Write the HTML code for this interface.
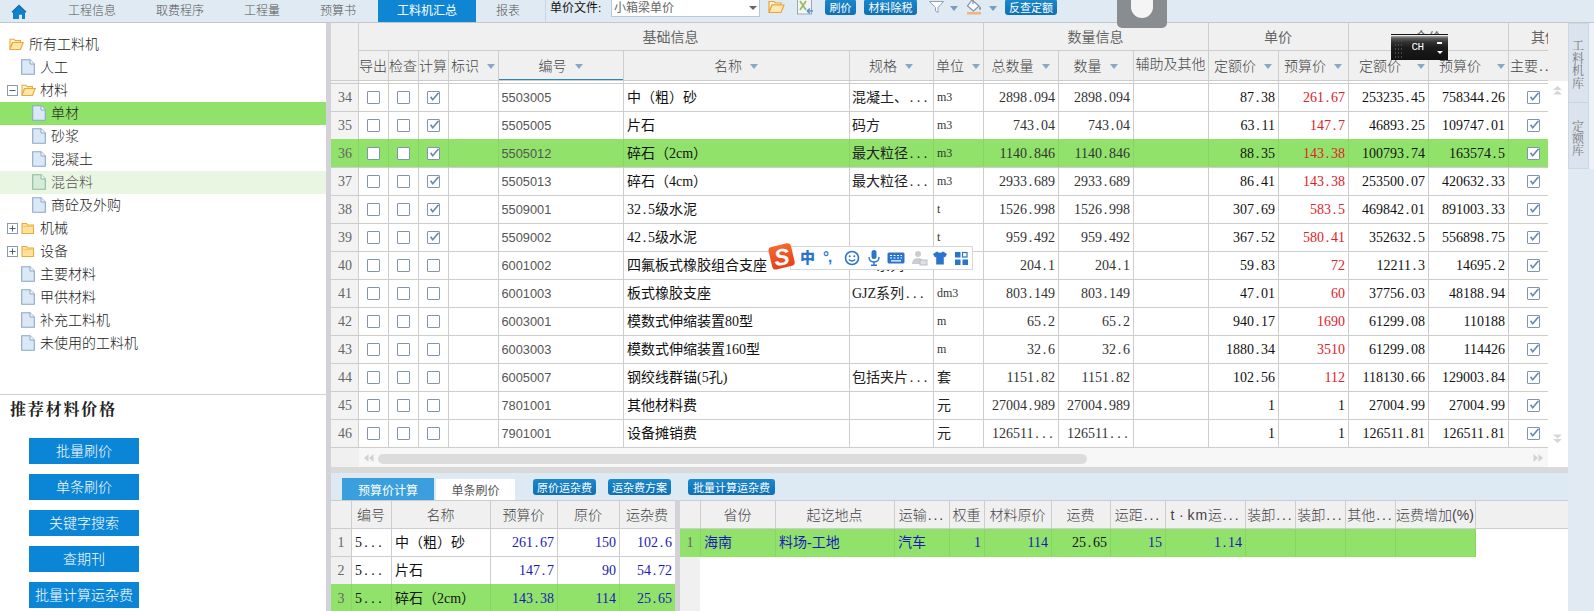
<!DOCTYPE html><html lang="zh-CN"><head><meta charset="utf-8"><title>工料机汇总</title><style>
*{box-sizing:border-box;margin:0;padding:0}
html,body{width:1594px;height:611px;overflow:hidden;background:#fff}
body{position:relative;font-family:"Liberation Sans","Noto Sans CJK SC",sans-serif;font-size:14px;color:#222}
.a{position:absolute;white-space:nowrap;overflow:hidden}
.t{position:absolute;white-space:nowrap}
.sans{font-family:"Liberation Sans","Noto Sans CJK SC",sans-serif}
.song{font-family:"Liberation Serif","Noto Sans CJK SC",sans-serif}
.p{display:inline-block;width:7px;text-align:center}
.q{display:inline-block;width:5.8px;text-align:center}
.hl{position:absolute;background:#d0d0d0;height:1px}
.vl{position:absolute;background:#d0d0d0;width:1px}
.cb{position:absolute;width:13px;height:13px;border:1px solid #8195b0;background:#fff;border-radius:1px}
.btn{position:absolute;background:linear-gradient(#1c88cc,#0f70b4);color:#fff;border-radius:3px;text-align:center;font-size:11px;white-space:nowrap;overflow:hidden}
.bbtn{position:absolute;background:#0b86d6;color:#fff;font-weight:300;text-align:center;font-size:14px;white-space:nowrap;left:29px;width:110px;height:26px;line-height:27px}
.hd{position:absolute;color:#444;font-weight:300;font-size:14px;white-space:nowrap;text-align:center}
.arr{position:absolute;width:0;height:0;border-left:4px solid transparent;border-right:4px solid transparent;border-top:5px solid #7a9cc0}
.tree{position:absolute;font-size:14px;font-weight:300;color:#111;white-space:nowrap;height:23px;line-height:22px}
</style></head><body>
<div class="a" style="left:0px;top:0px;width:1594px;height:23px;background:#e0eaf3;border-bottom:1px solid #c2c7cc"></div>
<svg class="a" style="left:11px;top:4px" width="16" height="16" viewBox="0 0 16 16"><path d="M2 7.2 L8 2 L14 7.2 V15 H11 V10.7 H8 V15 H2 Z" fill="#1080c9"/><path d="M1 8.3 L8 1.5 L15 8.3" fill="none" stroke="#0e6fb2" stroke-width="1.5"/></svg>
<div class="a" style="left:378px;top:0px;width:98px;height:22px;background:#0f86d3;"></div>
<div class="a " style="left:378px;top:0px;width:98px;height:22px;line-height:22px;color:#fff;font-size:12px;text-align:center;line-height:23px">工料机汇总</div>
<div class="a " style="left:52px;top:0px;width:80px;height:22px;line-height:22px;color:#555;font-size:12px;text-align:center;line-height:23px;font-weight:300">工程信息</div>
<div class="a " style="left:140px;top:0px;width:80px;height:22px;line-height:22px;color:#555;font-size:12px;text-align:center;line-height:23px;font-weight:300">取费程序</div>
<div class="a " style="left:222px;top:0px;width:80px;height:22px;line-height:22px;color:#555;font-size:12px;text-align:center;line-height:23px;font-weight:300">工程量</div>
<div class="a " style="left:298px;top:0px;width:80px;height:22px;line-height:22px;color:#555;font-size:12px;text-align:center;line-height:23px;font-weight:300">预算书</div>
<div class="a " style="left:468px;top:0px;width:80px;height:22px;line-height:22px;color:#555;font-size:12px;text-align:center;line-height:23px;font-weight:300">报表</div>
<div class="vl" style="left:545px;top:0px;height:22px;background:#c9d5e0"></div>
<div class="a song" style="left:550px;top:0px;width:60px;height:16px;line-height:16px;color:#111;font-size:12px;">单价文件:</div>
<div class="a" style="left:611px;top:-1px;width:149px;height:18px;background:#fff;border:1px solid #b9c7d6"></div>
<div class="a song" style="left:614px;top:0px;width:130px;height:16px;line-height:16px;color:#666;font-size:12px">小箱梁单价</div>
<div class="arr" style="left:749px;top:6px;border-top-color:#666;border-left-width:4px;border-right-width:4px;border-top-width:4px"></div>
<svg class="a" style="left:768px;top:0px" width="17" height="14" viewBox="0 0 17 14"><path d="M1 1.5 H6 L7.5 3 H13 V5 H4 L1 12 Z" fill="#fff6dc" stroke="#e9a33a" stroke-width="1.2"/><path d="M4 5 H16 L13 12.5 H1 Z" fill="#ffe9b0" stroke="#e9a33a" stroke-width="1.2"/></svg>
<svg class="a" style="left:797px;top:0px" width="18" height="15" viewBox="0 0 18 15"><rect x="0.5" y="-1" width="14" height="15" fill="#f4f6f4" stroke="#9aa7b5"/><path d="M3 1 L9 10 M9 1 L3 10" stroke="#9cba6e" stroke-width="1.8"/><path d="M10 11 h6 M10 11 l3 -2.5 M10 11 l3 2.5" stroke="#5b8fd0" stroke-width="1.4" fill="none"/></svg>
<div class="btn" style="left:825px;top:-1px;width:31px;height:16px;line-height:19px">刷价</div>
<div class="btn" style="left:864px;top:-1px;width:53px;height:16px;line-height:19px">材料除税</div>
<svg class="a" style="left:928px;top:0px" width="18" height="14" viewBox="0 0 18 14"><path d="M1.5 1.5 H15.5 L10 7.5 V12.5 L7.5 11 V7.5 Z" fill="#fff" stroke="#8fa2b8" stroke-width="1"/></svg>
<div class="arr" style="left:950px;top:6px"></div>
<svg class="a" style="left:965px;top:-2px" width="20" height="18" viewBox="0 0 20 18"><path d="M7 2 L14 8 L8.5 13 L2.5 8 Z" fill="#fff" stroke="#7d93ab" stroke-width="1.2"/><path d="M8 0 V6" stroke="#7d93ab" stroke-width="1.2"/><path d="M15 8 q2 3 0 4 q-2 -1 0 -4" fill="#7d93ab"/><rect x="2" y="14" width="14" height="2.5" fill="#f3b27a"/></svg>
<div class="arr" style="left:989px;top:6px"></div>
<div class="btn" style="left:1005px;top:-1px;width:52px;height:16px;line-height:19px">反查定额</div>
<div class="a" style="left:0px;top:23px;width:326px;height:588px;background:#fff;"></div>
<div class="a" style="left:326px;top:23px;width:5px;height:588px;background:#d2d2d8;"></div>
<svg class="a" style="left:9px;top:38.0px" width="15" height="13" viewBox="0 0 15 13"><path d="M1 1.2 H5 L6.3 2.6 H11.5 V4.5 H3.6 L1 10.8 Z" fill="#fff4d6" stroke="#e8a93f" stroke-width="1.1"/><path d="M3.6 4.5 H14.2 L11.5 11.5 H0.9 Z" fill="#ffe6a6" stroke="#e8a93f" stroke-width="1.1"/></svg>
<div class="tree" style="left:29px;top:32.5px;color:#222">所有工料机</div>
<svg class="a" style="left:21px;top:59.0px" width="14" height="16" viewBox="0 0 14 16"><path d="M0.7 0.7 H9 L13.3 5 V15.3 H0.7 Z" fill="#dbe8f6" stroke="#8ba6c8" stroke-width="1.1"/><path d="M9 0.7 V5 H13.3" fill="#f4f8fc" stroke="#8ba6c8" stroke-width="1"/></svg>
<div class="tree" style="left:40px;top:55.5px;color:#222">人工</div>
<svg class="a" style="left:7px;top:84.5px" width="11" height="11" viewBox="0 0 11 11"><rect x="0.5" y="0.5" width="10" height="10" fill="#fff" stroke="#8a9bb3"/><path d="M2.5 5.5 H8.5" stroke="#4a5a70" stroke-width="1"/></svg>
<svg class="a" style="left:21px;top:84.0px" width="15" height="13" viewBox="0 0 15 13"><path d="M1 1.2 H5 L6.3 2.6 H11.5 V4.5 H3.6 L1 10.8 Z" fill="#fff4d6" stroke="#e8a93f" stroke-width="1.1"/><path d="M3.6 4.5 H14.2 L11.5 11.5 H0.9 Z" fill="#ffe6a6" stroke="#e8a93f" stroke-width="1.1"/></svg>
<div class="tree" style="left:40px;top:78.5px;color:#222">材料</div>
<div class="a" style="left:0px;top:101.5px;width:326px;height:23px;background:#91e26b;"></div>
<svg class="a" style="left:32px;top:105.0px" width="14" height="16" viewBox="0 0 14 16"><path d="M0.7 0.7 H9 L13.3 5 V15.3 H0.7 Z" fill="#dbe8f6" stroke="#8ba6c8" stroke-width="1.1"/><path d="M9 0.7 V5 H13.3" fill="#f4f8fc" stroke="#8ba6c8" stroke-width="1"/></svg>
<div class="tree" style="left:51px;top:101.5px;color:#222">单材</div>
<svg class="a" style="left:32px;top:128.0px" width="14" height="16" viewBox="0 0 14 16"><path d="M0.7 0.7 H9 L13.3 5 V15.3 H0.7 Z" fill="#dbe8f6" stroke="#8ba6c8" stroke-width="1.1"/><path d="M9 0.7 V5 H13.3" fill="#f4f8fc" stroke="#8ba6c8" stroke-width="1"/></svg>
<div class="tree" style="left:51px;top:124.5px;color:#222">砂浆</div>
<svg class="a" style="left:32px;top:151.0px" width="14" height="16" viewBox="0 0 14 16"><path d="M0.7 0.7 H9 L13.3 5 V15.3 H0.7 Z" fill="#dbe8f6" stroke="#8ba6c8" stroke-width="1.1"/><path d="M9 0.7 V5 H13.3" fill="#f4f8fc" stroke="#8ba6c8" stroke-width="1"/></svg>
<div class="tree" style="left:51px;top:147.5px;color:#222">混凝土</div>
<div class="a" style="left:0px;top:170.5px;width:326px;height:23px;background:#e9f6e2;"></div>
<svg class="a" style="left:32px;top:174.0px" width="14" height="16" viewBox="0 0 14 16"><path d="M0.7 0.7 H9 L13.3 5 V15.3 H0.7 Z" fill="#d5ecd9" stroke="#8fb9a0" stroke-width="1.1"/><path d="M9 0.7 V5 H13.3" fill="#f4f8fc" stroke="#8fb9a0" stroke-width="1"/></svg>
<div class="tree" style="left:51px;top:170.5px;color:#555">混合料</div>
<svg class="a" style="left:32px;top:197.0px" width="14" height="16" viewBox="0 0 14 16"><path d="M0.7 0.7 H9 L13.3 5 V15.3 H0.7 Z" fill="#dbe8f6" stroke="#8ba6c8" stroke-width="1.1"/><path d="M9 0.7 V5 H13.3" fill="#f4f8fc" stroke="#8ba6c8" stroke-width="1"/></svg>
<div class="tree" style="left:51px;top:193.5px;color:#222">商砼及外购</div>
<svg class="a" style="left:7px;top:222.5px" width="11" height="11" viewBox="0 0 11 11"><rect x="0.5" y="0.5" width="10" height="10" fill="#fff" stroke="#8a9bb3"/><path d="M2.5 5.5 H8.5" stroke="#4a5a70" stroke-width="1"/><path d="M5.5 2.5 V8.5" stroke="#4a5a70" stroke-width="1"/></svg>
<svg class="a" style="left:21px;top:222.0px" width="14" height="13" viewBox="0 0 14 13"><path d="M1 1.5 H5.5 L6.8 3 H12.5 V11.5 H1 Z" fill="#ffe29a" stroke="#e8a93f" stroke-width="1.1"/><path d="M1 4.4 H12.5" stroke="#f3c569" stroke-width="1"/></svg>
<div class="tree" style="left:40px;top:216.5px;color:#222">机械</div>
<svg class="a" style="left:7px;top:245.5px" width="11" height="11" viewBox="0 0 11 11"><rect x="0.5" y="0.5" width="10" height="10" fill="#fff" stroke="#8a9bb3"/><path d="M2.5 5.5 H8.5" stroke="#4a5a70" stroke-width="1"/><path d="M5.5 2.5 V8.5" stroke="#4a5a70" stroke-width="1"/></svg>
<svg class="a" style="left:21px;top:245.0px" width="14" height="13" viewBox="0 0 14 13"><path d="M1 1.5 H5.5 L6.8 3 H12.5 V11.5 H1 Z" fill="#ffe29a" stroke="#e8a93f" stroke-width="1.1"/><path d="M1 4.4 H12.5" stroke="#f3c569" stroke-width="1"/></svg>
<div class="tree" style="left:40px;top:239.5px;color:#222">设备</div>
<svg class="a" style="left:21px;top:266.0px" width="14" height="16" viewBox="0 0 14 16"><path d="M0.7 0.7 H9 L13.3 5 V15.3 H0.7 Z" fill="#dbe8f6" stroke="#8ba6c8" stroke-width="1.1"/><path d="M9 0.7 V5 H13.3" fill="#f4f8fc" stroke="#8ba6c8" stroke-width="1"/></svg>
<div class="tree" style="left:40px;top:262.5px;color:#222">主要材料</div>
<svg class="a" style="left:21px;top:289.0px" width="14" height="16" viewBox="0 0 14 16"><path d="M0.7 0.7 H9 L13.3 5 V15.3 H0.7 Z" fill="#dbe8f6" stroke="#8ba6c8" stroke-width="1.1"/><path d="M9 0.7 V5 H13.3" fill="#f4f8fc" stroke="#8ba6c8" stroke-width="1"/></svg>
<div class="tree" style="left:40px;top:285.5px;color:#222">甲供材料</div>
<svg class="a" style="left:21px;top:312.0px" width="14" height="16" viewBox="0 0 14 16"><path d="M0.7 0.7 H9 L13.3 5 V15.3 H0.7 Z" fill="#dbe8f6" stroke="#8ba6c8" stroke-width="1.1"/><path d="M9 0.7 V5 H13.3" fill="#f4f8fc" stroke="#8ba6c8" stroke-width="1"/></svg>
<div class="tree" style="left:40px;top:308.5px;color:#222">补充工料机</div>
<svg class="a" style="left:21px;top:335.0px" width="14" height="16" viewBox="0 0 14 16"><path d="M0.7 0.7 H9 L13.3 5 V15.3 H0.7 Z" fill="#dbe8f6" stroke="#8ba6c8" stroke-width="1.1"/><path d="M9 0.7 V5 H13.3" fill="#f4f8fc" stroke="#8ba6c8" stroke-width="1"/></svg>
<div class="tree" style="left:40px;top:331.5px;color:#222">未使用的工料机</div>
<div class="hl" style="left:0px;top:394px;width:326px;background:#cfcfcf"></div>
<div class="t" style="left:10px;top:399px;font-family:'Liberation Serif','Noto Serif CJK SC',serif;font-weight:bold;font-size:16px;letter-spacing:1.8px;color:#222;line-height:22px">推荐材料价格</div>
<div class="bbtn" style="top:438px">批量刷价</div>
<div class="bbtn" style="top:474px">单条刷价</div>
<div class="bbtn" style="top:510px">关键字搜索</div>
<div class="bbtn" style="top:546px">查期刊</div>
<div class="bbtn" style="top:582px">批量计算运杂费</div>
<div class="a" style="left:331px;top:23px;width:1237px;height:425px;background:#fff;"></div>
<div class="a" style="left:331px;top:23px;width:1237px;height:58px;background:#f0f0f0;"></div>
<div class="a" style="left:331px;top:81px;width:28px;height:386px;background:#f3f3f3;"></div>
<div class="a " style="left:358px;top:23px;width:625px;height:28px;line-height:28px;color:#666;font-size:14px;text-align:center">基础信息</div>
<div class="a " style="left:983px;top:23px;width:225px;height:28px;line-height:28px;color:#666;font-size:14px;text-align:center">数量信息</div>
<div class="a " style="left:1208px;top:23px;width:140px;height:28px;line-height:28px;color:#666;font-size:14px;text-align:center">单价</div>
<div class="a " style="left:1348px;top:23px;width:160px;height:28px;line-height:28px;color:#666;font-size:14px;text-align:center">合价</div>
<div class="a " style="left:1531px;top:23px;width:17px;height:28px;line-height:28px;color:#666;font-size:14px;text-align:left">其他</div>
<div class="hl" style="left:358px;top:50px;width:1190px;background:#cdcdcd"></div>
<div class="hl" style="left:331px;top:80px;width:1217px;background:#cdcdcd"></div>
<div class="hd" style="left:358.0px;top:52px;width:30.0px;height:29px;line-height:29px;overflow:hidden">导出</div>
<div class="hd" style="left:388.0px;top:52px;width:30.0px;height:29px;line-height:29px;overflow:hidden">检查</div>
<div class="hd" style="left:418.0px;top:52px;width:30.0px;height:29px;line-height:29px;overflow:hidden">计算</div>
<div class="hd" style="left:448.0px;top:52px;width:50.0px;height:29px;line-height:29px;padding-left:0px">标识<span style="display:inline-block;width:0;height:0;border-left:4.5px solid transparent;border-right:4.5px solid transparent;border-top:5px solid #89a7c6;margin-left:8px;vertical-align:middle;position:relative;top:-1px"></span></div>
<div class="hd" style="left:498.0px;top:52px;width:125.0px;height:29px;line-height:29px;padding-left:0px">编号<span style="display:inline-block;width:0;height:0;border-left:4.5px solid transparent;border-right:4.5px solid transparent;border-top:5px solid #89a7c6;margin-left:8px;vertical-align:middle;position:relative;top:-1px"></span></div>
<div class="hd" style="left:623.0px;top:52px;width:226.0px;height:29px;line-height:29px;padding-left:0px">名称<span style="display:inline-block;width:0;height:0;border-left:4.5px solid transparent;border-right:4.5px solid transparent;border-top:5px solid #89a7c6;margin-left:8px;vertical-align:middle;position:relative;top:-1px"></span></div>
<div class="hd" style="left:849.0px;top:52px;width:84.0px;height:29px;line-height:29px;padding-left:0px">规格<span style="display:inline-block;width:0;height:0;border-left:4.5px solid transparent;border-right:4.5px solid transparent;border-top:5px solid #89a7c6;margin-left:8px;vertical-align:middle;position:relative;top:-1px"></span></div>
<div class="hd" style="left:933.0px;top:52px;width:50.0px;height:29px;line-height:29px;padding-left:0px">单位<span style="display:inline-block;width:0;height:0;border-left:4.5px solid transparent;border-right:4.5px solid transparent;border-top:5px solid #89a7c6;margin-left:8px;vertical-align:middle;position:relative;top:-1px"></span></div>
<div class="hd" style="left:983.0px;top:52px;width:75.0px;height:29px;line-height:29px;padding-left:0px">总数量<span style="display:inline-block;width:0;height:0;border-left:4.5px solid transparent;border-right:4.5px solid transparent;border-top:5px solid #89a7c6;margin-left:8px;vertical-align:middle;position:relative;top:-1px"></span></div>
<div class="hd" style="left:1058.0px;top:52px;width:75.0px;height:29px;line-height:29px;padding-left:0px">数量<span style="display:inline-block;width:0;height:0;border-left:4.5px solid transparent;border-right:4.5px solid transparent;border-top:5px solid #89a7c6;margin-left:8px;vertical-align:middle;position:relative;top:-1px"></span></div>
<div class="hd" style="left:1133.0px;top:50px;width:75.0px;height:29px;line-height:29px;overflow:hidden">辅助及其他</div>
<div class="hd" style="left:1208.0px;top:52px;width:70.0px;height:29px;line-height:29px;padding-left:0px">定额价<span style="display:inline-block;width:0;height:0;border-left:4.5px solid transparent;border-right:4.5px solid transparent;border-top:5px solid #89a7c6;margin-left:8px;vertical-align:middle;position:relative;top:-1px"></span></div>
<div class="hd" style="left:1278.0px;top:52px;width:70.0px;height:29px;line-height:29px;padding-left:0px">预算价<span style="display:inline-block;width:0;height:0;border-left:4.5px solid transparent;border-right:4.5px solid transparent;border-top:5px solid #89a7c6;margin-left:8px;vertical-align:middle;position:relative;top:-1px"></span></div>
<div class="hd" style="left:1348.0px;top:52px;width:80.0px;height:29px;line-height:29px;padding-left:8px">定额价<span style="display:inline-block;width:0;height:0;border-left:4.5px solid transparent;border-right:4.5px solid transparent;border-top:5px solid #89a7c6;margin-left:16px;vertical-align:middle;position:relative;top:-1px"></span></div>
<div class="hd" style="left:1428.0px;top:52px;width:80.0px;height:29px;line-height:29px;padding-left:8px">预算价<span style="display:inline-block;width:0;height:0;border-left:4.5px solid transparent;border-right:4.5px solid transparent;border-top:5px solid #89a7c6;margin-left:16px;vertical-align:middle;position:relative;top:-1px"></span></div>
<div class="hd" style="left:1510.0px;top:52px;width:37.5px;height:29px;line-height:29px;overflow:hidden;text-align:left">主要<span class="q">.</span><span class="q">.</span></div>
<div class="a" style="left:498px;top:78.5px;width:125px;height:1.5px;background:#2b84bb;"></div>
<div class="vl" style="left:358px;top:23px;height:425px;background:#cdcdcd"></div>
<div class="vl" style="left:388.0px;top:51px;height:397px;background:#cdcdcd"></div>
<div class="vl" style="left:418.0px;top:51px;height:397px;background:#cdcdcd"></div>
<div class="vl" style="left:448.0px;top:51px;height:397px;background:#cdcdcd"></div>
<div class="vl" style="left:498.0px;top:51px;height:397px;background:#cdcdcd"></div>
<div class="vl" style="left:623.0px;top:51px;height:397px;background:#cdcdcd"></div>
<div class="vl" style="left:849.0px;top:51px;height:397px;background:#cdcdcd"></div>
<div class="vl" style="left:933.0px;top:51px;height:397px;background:#cdcdcd"></div>
<div class="vl" style="left:983.0px;top:23px;height:425px;background:#cdcdcd"></div>
<div class="vl" style="left:1058.0px;top:51px;height:397px;background:#cdcdcd"></div>
<div class="vl" style="left:1133.0px;top:51px;height:397px;background:#cdcdcd"></div>
<div class="vl" style="left:1208.0px;top:23px;height:425px;background:#cdcdcd"></div>
<div class="vl" style="left:1278.0px;top:51px;height:397px;background:#cdcdcd"></div>
<div class="vl" style="left:1348.0px;top:23px;height:425px;background:#cdcdcd"></div>
<div class="vl" style="left:1428.0px;top:51px;height:397px;background:#cdcdcd"></div>
<div class="vl" style="left:1508.0px;top:23px;height:425px;background:#cdcdcd"></div>
<div class="hl" style="left:331px;top:83px;width:1217px;background:#cdcdcd"></div>
<div class="hl" style="left:331px;top:111px;width:1217px;background:#cdcdcd"></div>
<div class="hl" style="left:331px;top:139px;width:1217px;background:#cdcdcd"></div>
<div class="hl" style="left:331px;top:167px;width:1217px;background:#cdcdcd"></div>
<div class="hl" style="left:331px;top:195px;width:1217px;background:#cdcdcd"></div>
<div class="hl" style="left:331px;top:223px;width:1217px;background:#cdcdcd"></div>
<div class="hl" style="left:331px;top:251px;width:1217px;background:#cdcdcd"></div>
<div class="hl" style="left:331px;top:279px;width:1217px;background:#cdcdcd"></div>
<div class="hl" style="left:331px;top:307px;width:1217px;background:#cdcdcd"></div>
<div class="hl" style="left:331px;top:335px;width:1217px;background:#cdcdcd"></div>
<div class="hl" style="left:331px;top:363px;width:1217px;background:#cdcdcd"></div>
<div class="hl" style="left:331px;top:391px;width:1217px;background:#cdcdcd"></div>
<div class="hl" style="left:331px;top:419px;width:1217px;background:#cdcdcd"></div>
<div class="hl" style="left:331px;top:447px;width:1217px;background:#cdcdcd"></div>
<div class="a" style="left:331px;top:139px;width:1217px;height:28px;background:#91e26b;"></div>
<div class="vl" style="left:358px;top:139px;height:28px;background:#88d564"></div>
<div class="vl" style="left:388.0px;top:139px;height:28px;background:#88d564"></div>
<div class="vl" style="left:418.0px;top:139px;height:28px;background:#88d564"></div>
<div class="vl" style="left:448.0px;top:139px;height:28px;background:#88d564"></div>
<div class="vl" style="left:498.0px;top:139px;height:28px;background:#88d564"></div>
<div class="vl" style="left:623.0px;top:139px;height:28px;background:#88d564"></div>
<div class="vl" style="left:849.0px;top:139px;height:28px;background:#88d564"></div>
<div class="vl" style="left:933.0px;top:139px;height:28px;background:#88d564"></div>
<div class="vl" style="left:983.0px;top:139px;height:28px;background:#88d564"></div>
<div class="vl" style="left:1058.0px;top:139px;height:28px;background:#88d564"></div>
<div class="vl" style="left:1133.0px;top:139px;height:28px;background:#88d564"></div>
<div class="vl" style="left:1208.0px;top:139px;height:28px;background:#88d564"></div>
<div class="vl" style="left:1278.0px;top:139px;height:28px;background:#88d564"></div>
<div class="vl" style="left:1348.0px;top:139px;height:28px;background:#88d564"></div>
<div class="vl" style="left:1428.0px;top:139px;height:28px;background:#88d564"></div>
<div class="vl" style="left:1508.0px;top:139px;height:28px;background:#88d564"></div>
<div class="a song" style="left:331px;top:84px;width:28px;height:27px;line-height:27px;color:#666;text-align:center;font-size:14px">34</div>
<div class="cb" style="left:367px;top:91px"></div>
<div class="cb" style="left:397px;top:91px"></div>
<div class="cb" style="left:427px;top:91px"><svg width="11" height="11" viewBox="0 0 11 11" style="position:absolute;left:0;top:0"><path d="M2.6 4.8 L4.7 7.8 L10.6 0.8" fill="none" stroke="#6487b3" stroke-width="1.6"/></svg></div>
<div class="a sans" style="left:501.5px;top:84px;width:120px;height:27px;line-height:27px;color:#555;font-size:12.8px">5503005</div>
<div class="a song" style="left:627px;top:84px;width:222px;height:27px;line-height:27px;color:#111;font-size:14px">中（粗）砂</div>
<div class="a song" style="left:852px;top:84px;width:81px;height:27px;line-height:27px;color:#222;font-size:14px">混凝土、<span class="p">.</span><span class="p">.</span><span class="p">.</span></div>
<div class="a song" style="left:937px;top:84px;width:46px;height:27px;line-height:27px;color:#333;font-size:12px">m3</div>
<div class="a song" style="left:984px;top:84px;width:74px;height:27px;line-height:27px;color:#333;font-size:14px;text-align:right;padding-right:3px">2898<span class="p">.</span>094</div>
<div class="a song" style="left:1059px;top:84px;width:74px;height:27px;line-height:27px;color:#333;font-size:14px;text-align:right;padding-right:3px">2898<span class="p">.</span>094</div>
<div class="a song" style="left:1209px;top:84px;width:69px;height:27px;line-height:27px;color:#111;font-size:14px;text-align:right;padding-right:3px">87<span class="p">.</span>38</div>
<div class="a song" style="left:1279px;top:84px;width:69px;height:27px;line-height:27px;color:#e0202a;font-size:14px;text-align:right;padding-right:3px">261<span class="p">.</span>67</div>
<div class="a song" style="left:1349px;top:84px;width:79px;height:27px;line-height:27px;color:#111;font-size:14px;text-align:right;padding-right:3px">253235<span class="p">.</span>45</div>
<div class="a song" style="left:1429px;top:84px;width:79px;height:27px;line-height:27px;color:#111;font-size:14px;text-align:right;padding-right:3px">758344<span class="p">.</span>26</div>
<div class="cb" style="left:1527px;top:91px"><svg width="11" height="11" viewBox="0 0 11 11" style="position:absolute;left:0;top:0"><path d="M2.6 4.8 L4.7 7.8 L10.6 0.8" fill="none" stroke="#6487b3" stroke-width="1.6"/></svg></div>
<div class="a song" style="left:331px;top:112px;width:28px;height:27px;line-height:27px;color:#666;text-align:center;font-size:14px">35</div>
<div class="cb" style="left:367px;top:119px"></div>
<div class="cb" style="left:397px;top:119px"></div>
<div class="cb" style="left:427px;top:119px"><svg width="11" height="11" viewBox="0 0 11 11" style="position:absolute;left:0;top:0"><path d="M2.6 4.8 L4.7 7.8 L10.6 0.8" fill="none" stroke="#6487b3" stroke-width="1.6"/></svg></div>
<div class="a sans" style="left:501.5px;top:112px;width:120px;height:27px;line-height:27px;color:#555;font-size:12.8px">5505005</div>
<div class="a song" style="left:627px;top:112px;width:222px;height:27px;line-height:27px;color:#111;font-size:14px">片石</div>
<div class="a song" style="left:852px;top:112px;width:81px;height:27px;line-height:27px;color:#222;font-size:14px">码方</div>
<div class="a song" style="left:937px;top:112px;width:46px;height:27px;line-height:27px;color:#333;font-size:12px">m3</div>
<div class="a song" style="left:984px;top:112px;width:74px;height:27px;line-height:27px;color:#333;font-size:14px;text-align:right;padding-right:3px">743<span class="p">.</span>04</div>
<div class="a song" style="left:1059px;top:112px;width:74px;height:27px;line-height:27px;color:#333;font-size:14px;text-align:right;padding-right:3px">743<span class="p">.</span>04</div>
<div class="a song" style="left:1209px;top:112px;width:69px;height:27px;line-height:27px;color:#111;font-size:14px;text-align:right;padding-right:3px">63<span class="p">.</span>11</div>
<div class="a song" style="left:1279px;top:112px;width:69px;height:27px;line-height:27px;color:#e0202a;font-size:14px;text-align:right;padding-right:3px">147<span class="p">.</span>7</div>
<div class="a song" style="left:1349px;top:112px;width:79px;height:27px;line-height:27px;color:#111;font-size:14px;text-align:right;padding-right:3px">46893<span class="p">.</span>25</div>
<div class="a song" style="left:1429px;top:112px;width:79px;height:27px;line-height:27px;color:#111;font-size:14px;text-align:right;padding-right:3px">109747<span class="p">.</span>01</div>
<div class="cb" style="left:1527px;top:119px"><svg width="11" height="11" viewBox="0 0 11 11" style="position:absolute;left:0;top:0"><path d="M2.6 4.8 L4.7 7.8 L10.6 0.8" fill="none" stroke="#6487b3" stroke-width="1.6"/></svg></div>
<div class="a song" style="left:331px;top:140px;width:28px;height:27px;line-height:27px;color:#666;text-align:center;font-size:14px">36</div>
<div class="cb" style="left:367px;top:147px"></div>
<div class="cb" style="left:397px;top:147px"></div>
<div class="cb" style="left:427px;top:147px"><svg width="11" height="11" viewBox="0 0 11 11" style="position:absolute;left:0;top:0"><path d="M2.6 4.8 L4.7 7.8 L10.6 0.8" fill="none" stroke="#6487b3" stroke-width="1.6"/></svg></div>
<div class="a sans" style="left:501.5px;top:140px;width:120px;height:27px;line-height:27px;color:#555;font-size:12.8px">5505012</div>
<div class="a song" style="left:627px;top:140px;width:222px;height:27px;line-height:27px;color:#111;font-size:14px">碎石（2cm）</div>
<div class="a song" style="left:852px;top:140px;width:81px;height:27px;line-height:27px;color:#222;font-size:14px">最大粒径<span class="p">.</span><span class="p">.</span><span class="p">.</span></div>
<div class="a song" style="left:937px;top:140px;width:46px;height:27px;line-height:27px;color:#333;font-size:12px">m3</div>
<div class="a song" style="left:984px;top:140px;width:74px;height:27px;line-height:27px;color:#333;font-size:14px;text-align:right;padding-right:3px">1140<span class="p">.</span>846</div>
<div class="a song" style="left:1059px;top:140px;width:74px;height:27px;line-height:27px;color:#333;font-size:14px;text-align:right;padding-right:3px">1140<span class="p">.</span>846</div>
<div class="a song" style="left:1209px;top:140px;width:69px;height:27px;line-height:27px;color:#111;font-size:14px;text-align:right;padding-right:3px">88<span class="p">.</span>35</div>
<div class="a song" style="left:1279px;top:140px;width:69px;height:27px;line-height:27px;color:#e0202a;font-size:14px;text-align:right;padding-right:3px">143<span class="p">.</span>38</div>
<div class="a song" style="left:1349px;top:140px;width:79px;height:27px;line-height:27px;color:#111;font-size:14px;text-align:right;padding-right:3px">100793<span class="p">.</span>74</div>
<div class="a song" style="left:1429px;top:140px;width:79px;height:27px;line-height:27px;color:#111;font-size:14px;text-align:right;padding-right:3px">163574<span class="p">.</span>5</div>
<div class="cb" style="left:1527px;top:147px"><svg width="11" height="11" viewBox="0 0 11 11" style="position:absolute;left:0;top:0"><path d="M2.6 4.8 L4.7 7.8 L10.6 0.8" fill="none" stroke="#6487b3" stroke-width="1.6"/></svg></div>
<div class="a song" style="left:331px;top:168px;width:28px;height:27px;line-height:27px;color:#666;text-align:center;font-size:14px">37</div>
<div class="cb" style="left:367px;top:175px"></div>
<div class="cb" style="left:397px;top:175px"></div>
<div class="cb" style="left:427px;top:175px"><svg width="11" height="11" viewBox="0 0 11 11" style="position:absolute;left:0;top:0"><path d="M2.6 4.8 L4.7 7.8 L10.6 0.8" fill="none" stroke="#6487b3" stroke-width="1.6"/></svg></div>
<div class="a sans" style="left:501.5px;top:168px;width:120px;height:27px;line-height:27px;color:#555;font-size:12.8px">5505013</div>
<div class="a song" style="left:627px;top:168px;width:222px;height:27px;line-height:27px;color:#111;font-size:14px">碎石（4cm）</div>
<div class="a song" style="left:852px;top:168px;width:81px;height:27px;line-height:27px;color:#222;font-size:14px">最大粒径<span class="p">.</span><span class="p">.</span><span class="p">.</span></div>
<div class="a song" style="left:937px;top:168px;width:46px;height:27px;line-height:27px;color:#333;font-size:12px">m3</div>
<div class="a song" style="left:984px;top:168px;width:74px;height:27px;line-height:27px;color:#333;font-size:14px;text-align:right;padding-right:3px">2933<span class="p">.</span>689</div>
<div class="a song" style="left:1059px;top:168px;width:74px;height:27px;line-height:27px;color:#333;font-size:14px;text-align:right;padding-right:3px">2933<span class="p">.</span>689</div>
<div class="a song" style="left:1209px;top:168px;width:69px;height:27px;line-height:27px;color:#111;font-size:14px;text-align:right;padding-right:3px">86<span class="p">.</span>41</div>
<div class="a song" style="left:1279px;top:168px;width:69px;height:27px;line-height:27px;color:#e0202a;font-size:14px;text-align:right;padding-right:3px">143<span class="p">.</span>38</div>
<div class="a song" style="left:1349px;top:168px;width:79px;height:27px;line-height:27px;color:#111;font-size:14px;text-align:right;padding-right:3px">253500<span class="p">.</span>07</div>
<div class="a song" style="left:1429px;top:168px;width:79px;height:27px;line-height:27px;color:#111;font-size:14px;text-align:right;padding-right:3px">420632<span class="p">.</span>33</div>
<div class="cb" style="left:1527px;top:175px"><svg width="11" height="11" viewBox="0 0 11 11" style="position:absolute;left:0;top:0"><path d="M2.6 4.8 L4.7 7.8 L10.6 0.8" fill="none" stroke="#6487b3" stroke-width="1.6"/></svg></div>
<div class="a song" style="left:331px;top:196px;width:28px;height:27px;line-height:27px;color:#666;text-align:center;font-size:14px">38</div>
<div class="cb" style="left:367px;top:203px"></div>
<div class="cb" style="left:397px;top:203px"></div>
<div class="cb" style="left:427px;top:203px"><svg width="11" height="11" viewBox="0 0 11 11" style="position:absolute;left:0;top:0"><path d="M2.6 4.8 L4.7 7.8 L10.6 0.8" fill="none" stroke="#6487b3" stroke-width="1.6"/></svg></div>
<div class="a sans" style="left:501.5px;top:196px;width:120px;height:27px;line-height:27px;color:#555;font-size:12.8px">5509001</div>
<div class="a song" style="left:627px;top:196px;width:222px;height:27px;line-height:27px;color:#111;font-size:14px">32<span class="p">.</span>5级水泥</div>
<div class="a song" style="left:852px;top:196px;width:81px;height:27px;line-height:27px;color:#222;font-size:14px"></div>
<div class="a song" style="left:937px;top:196px;width:46px;height:27px;line-height:27px;color:#333;font-size:12px">t</div>
<div class="a song" style="left:984px;top:196px;width:74px;height:27px;line-height:27px;color:#333;font-size:14px;text-align:right;padding-right:3px">1526<span class="p">.</span>998</div>
<div class="a song" style="left:1059px;top:196px;width:74px;height:27px;line-height:27px;color:#333;font-size:14px;text-align:right;padding-right:3px">1526<span class="p">.</span>998</div>
<div class="a song" style="left:1209px;top:196px;width:69px;height:27px;line-height:27px;color:#111;font-size:14px;text-align:right;padding-right:3px">307<span class="p">.</span>69</div>
<div class="a song" style="left:1279px;top:196px;width:69px;height:27px;line-height:27px;color:#e0202a;font-size:14px;text-align:right;padding-right:3px">583<span class="p">.</span>5</div>
<div class="a song" style="left:1349px;top:196px;width:79px;height:27px;line-height:27px;color:#111;font-size:14px;text-align:right;padding-right:3px">469842<span class="p">.</span>01</div>
<div class="a song" style="left:1429px;top:196px;width:79px;height:27px;line-height:27px;color:#111;font-size:14px;text-align:right;padding-right:3px">891003<span class="p">.</span>33</div>
<div class="cb" style="left:1527px;top:203px"><svg width="11" height="11" viewBox="0 0 11 11" style="position:absolute;left:0;top:0"><path d="M2.6 4.8 L4.7 7.8 L10.6 0.8" fill="none" stroke="#6487b3" stroke-width="1.6"/></svg></div>
<div class="a song" style="left:331px;top:224px;width:28px;height:27px;line-height:27px;color:#666;text-align:center;font-size:14px">39</div>
<div class="cb" style="left:367px;top:231px"></div>
<div class="cb" style="left:397px;top:231px"></div>
<div class="cb" style="left:427px;top:231px"><svg width="11" height="11" viewBox="0 0 11 11" style="position:absolute;left:0;top:0"><path d="M2.6 4.8 L4.7 7.8 L10.6 0.8" fill="none" stroke="#6487b3" stroke-width="1.6"/></svg></div>
<div class="a sans" style="left:501.5px;top:224px;width:120px;height:27px;line-height:27px;color:#555;font-size:12.8px">5509002</div>
<div class="a song" style="left:627px;top:224px;width:222px;height:27px;line-height:27px;color:#111;font-size:14px">42<span class="p">.</span>5级水泥</div>
<div class="a song" style="left:852px;top:224px;width:81px;height:27px;line-height:27px;color:#222;font-size:14px"></div>
<div class="a song" style="left:937px;top:224px;width:46px;height:27px;line-height:27px;color:#333;font-size:12px">t</div>
<div class="a song" style="left:984px;top:224px;width:74px;height:27px;line-height:27px;color:#333;font-size:14px;text-align:right;padding-right:3px">959<span class="p">.</span>492</div>
<div class="a song" style="left:1059px;top:224px;width:74px;height:27px;line-height:27px;color:#333;font-size:14px;text-align:right;padding-right:3px">959<span class="p">.</span>492</div>
<div class="a song" style="left:1209px;top:224px;width:69px;height:27px;line-height:27px;color:#111;font-size:14px;text-align:right;padding-right:3px">367<span class="p">.</span>52</div>
<div class="a song" style="left:1279px;top:224px;width:69px;height:27px;line-height:27px;color:#e0202a;font-size:14px;text-align:right;padding-right:3px">580<span class="p">.</span>41</div>
<div class="a song" style="left:1349px;top:224px;width:79px;height:27px;line-height:27px;color:#111;font-size:14px;text-align:right;padding-right:3px">352632<span class="p">.</span>5</div>
<div class="a song" style="left:1429px;top:224px;width:79px;height:27px;line-height:27px;color:#111;font-size:14px;text-align:right;padding-right:3px">556898<span class="p">.</span>75</div>
<div class="cb" style="left:1527px;top:231px"><svg width="11" height="11" viewBox="0 0 11 11" style="position:absolute;left:0;top:0"><path d="M2.6 4.8 L4.7 7.8 L10.6 0.8" fill="none" stroke="#6487b3" stroke-width="1.6"/></svg></div>
<div class="a song" style="left:331px;top:252px;width:28px;height:27px;line-height:27px;color:#666;text-align:center;font-size:14px">40</div>
<div class="cb" style="left:367px;top:259px"></div>
<div class="cb" style="left:397px;top:259px"></div>
<div class="cb" style="left:427px;top:259px"></div>
<div class="a sans" style="left:501.5px;top:252px;width:120px;height:27px;line-height:27px;color:#555;font-size:12.8px">6001002</div>
<div class="a song" style="left:627px;top:252px;width:222px;height:27px;line-height:27px;color:#111;font-size:14px">四氟板式橡胶组合支座</div>
<div class="a song" style="left:852px;top:252px;width:81px;height:27px;line-height:27px;color:#222;font-size:14px">GJZ系列<span class="p">.</span><span class="p">.</span><span class="p">.</span></div>
<div class="a song" style="left:937px;top:252px;width:46px;height:27px;line-height:27px;color:#333;font-size:12px">dm3</div>
<div class="a song" style="left:984px;top:252px;width:74px;height:27px;line-height:27px;color:#333;font-size:14px;text-align:right;padding-right:3px">204<span class="p">.</span>1</div>
<div class="a song" style="left:1059px;top:252px;width:74px;height:27px;line-height:27px;color:#333;font-size:14px;text-align:right;padding-right:3px">204<span class="p">.</span>1</div>
<div class="a song" style="left:1209px;top:252px;width:69px;height:27px;line-height:27px;color:#111;font-size:14px;text-align:right;padding-right:3px">59<span class="p">.</span>83</div>
<div class="a song" style="left:1279px;top:252px;width:69px;height:27px;line-height:27px;color:#e0202a;font-size:14px;text-align:right;padding-right:3px">72</div>
<div class="a song" style="left:1349px;top:252px;width:79px;height:27px;line-height:27px;color:#111;font-size:14px;text-align:right;padding-right:3px">12211<span class="p">.</span>3</div>
<div class="a song" style="left:1429px;top:252px;width:79px;height:27px;line-height:27px;color:#111;font-size:14px;text-align:right;padding-right:3px">14695<span class="p">.</span>2</div>
<div class="cb" style="left:1527px;top:259px"><svg width="11" height="11" viewBox="0 0 11 11" style="position:absolute;left:0;top:0"><path d="M2.6 4.8 L4.7 7.8 L10.6 0.8" fill="none" stroke="#6487b3" stroke-width="1.6"/></svg></div>
<div class="a song" style="left:331px;top:280px;width:28px;height:27px;line-height:27px;color:#666;text-align:center;font-size:14px">41</div>
<div class="cb" style="left:367px;top:287px"></div>
<div class="cb" style="left:397px;top:287px"></div>
<div class="cb" style="left:427px;top:287px"></div>
<div class="a sans" style="left:501.5px;top:280px;width:120px;height:27px;line-height:27px;color:#555;font-size:12.8px">6001003</div>
<div class="a song" style="left:627px;top:280px;width:222px;height:27px;line-height:27px;color:#111;font-size:14px">板式橡胶支座</div>
<div class="a song" style="left:852px;top:280px;width:81px;height:27px;line-height:27px;color:#222;font-size:14px">GJZ系列<span class="p">.</span><span class="p">.</span><span class="p">.</span></div>
<div class="a song" style="left:937px;top:280px;width:46px;height:27px;line-height:27px;color:#333;font-size:12px">dm3</div>
<div class="a song" style="left:984px;top:280px;width:74px;height:27px;line-height:27px;color:#333;font-size:14px;text-align:right;padding-right:3px">803<span class="p">.</span>149</div>
<div class="a song" style="left:1059px;top:280px;width:74px;height:27px;line-height:27px;color:#333;font-size:14px;text-align:right;padding-right:3px">803<span class="p">.</span>149</div>
<div class="a song" style="left:1209px;top:280px;width:69px;height:27px;line-height:27px;color:#111;font-size:14px;text-align:right;padding-right:3px">47<span class="p">.</span>01</div>
<div class="a song" style="left:1279px;top:280px;width:69px;height:27px;line-height:27px;color:#e0202a;font-size:14px;text-align:right;padding-right:3px">60</div>
<div class="a song" style="left:1349px;top:280px;width:79px;height:27px;line-height:27px;color:#111;font-size:14px;text-align:right;padding-right:3px">37756<span class="p">.</span>03</div>
<div class="a song" style="left:1429px;top:280px;width:79px;height:27px;line-height:27px;color:#111;font-size:14px;text-align:right;padding-right:3px">48188<span class="p">.</span>94</div>
<div class="cb" style="left:1527px;top:287px"><svg width="11" height="11" viewBox="0 0 11 11" style="position:absolute;left:0;top:0"><path d="M2.6 4.8 L4.7 7.8 L10.6 0.8" fill="none" stroke="#6487b3" stroke-width="1.6"/></svg></div>
<div class="a song" style="left:331px;top:308px;width:28px;height:27px;line-height:27px;color:#666;text-align:center;font-size:14px">42</div>
<div class="cb" style="left:367px;top:315px"></div>
<div class="cb" style="left:397px;top:315px"></div>
<div class="cb" style="left:427px;top:315px"></div>
<div class="a sans" style="left:501.5px;top:308px;width:120px;height:27px;line-height:27px;color:#555;font-size:12.8px">6003001</div>
<div class="a song" style="left:627px;top:308px;width:222px;height:27px;line-height:27px;color:#111;font-size:14px">模数式伸缩装置80型</div>
<div class="a song" style="left:852px;top:308px;width:81px;height:27px;line-height:27px;color:#222;font-size:14px"></div>
<div class="a song" style="left:937px;top:308px;width:46px;height:27px;line-height:27px;color:#333;font-size:12px">m</div>
<div class="a song" style="left:984px;top:308px;width:74px;height:27px;line-height:27px;color:#333;font-size:14px;text-align:right;padding-right:3px">65<span class="p">.</span>2</div>
<div class="a song" style="left:1059px;top:308px;width:74px;height:27px;line-height:27px;color:#333;font-size:14px;text-align:right;padding-right:3px">65<span class="p">.</span>2</div>
<div class="a song" style="left:1209px;top:308px;width:69px;height:27px;line-height:27px;color:#111;font-size:14px;text-align:right;padding-right:3px">940<span class="p">.</span>17</div>
<div class="a song" style="left:1279px;top:308px;width:69px;height:27px;line-height:27px;color:#e0202a;font-size:14px;text-align:right;padding-right:3px">1690</div>
<div class="a song" style="left:1349px;top:308px;width:79px;height:27px;line-height:27px;color:#111;font-size:14px;text-align:right;padding-right:3px">61299<span class="p">.</span>08</div>
<div class="a song" style="left:1429px;top:308px;width:79px;height:27px;line-height:27px;color:#111;font-size:14px;text-align:right;padding-right:3px">110188</div>
<div class="cb" style="left:1527px;top:315px"><svg width="11" height="11" viewBox="0 0 11 11" style="position:absolute;left:0;top:0"><path d="M2.6 4.8 L4.7 7.8 L10.6 0.8" fill="none" stroke="#6487b3" stroke-width="1.6"/></svg></div>
<div class="a song" style="left:331px;top:336px;width:28px;height:27px;line-height:27px;color:#666;text-align:center;font-size:14px">43</div>
<div class="cb" style="left:367px;top:343px"></div>
<div class="cb" style="left:397px;top:343px"></div>
<div class="cb" style="left:427px;top:343px"></div>
<div class="a sans" style="left:501.5px;top:336px;width:120px;height:27px;line-height:27px;color:#555;font-size:12.8px">6003003</div>
<div class="a song" style="left:627px;top:336px;width:222px;height:27px;line-height:27px;color:#111;font-size:14px">模数式伸缩装置160型</div>
<div class="a song" style="left:852px;top:336px;width:81px;height:27px;line-height:27px;color:#222;font-size:14px"></div>
<div class="a song" style="left:937px;top:336px;width:46px;height:27px;line-height:27px;color:#333;font-size:12px">m</div>
<div class="a song" style="left:984px;top:336px;width:74px;height:27px;line-height:27px;color:#333;font-size:14px;text-align:right;padding-right:3px">32<span class="p">.</span>6</div>
<div class="a song" style="left:1059px;top:336px;width:74px;height:27px;line-height:27px;color:#333;font-size:14px;text-align:right;padding-right:3px">32<span class="p">.</span>6</div>
<div class="a song" style="left:1209px;top:336px;width:69px;height:27px;line-height:27px;color:#111;font-size:14px;text-align:right;padding-right:3px">1880<span class="p">.</span>34</div>
<div class="a song" style="left:1279px;top:336px;width:69px;height:27px;line-height:27px;color:#e0202a;font-size:14px;text-align:right;padding-right:3px">3510</div>
<div class="a song" style="left:1349px;top:336px;width:79px;height:27px;line-height:27px;color:#111;font-size:14px;text-align:right;padding-right:3px">61299<span class="p">.</span>08</div>
<div class="a song" style="left:1429px;top:336px;width:79px;height:27px;line-height:27px;color:#111;font-size:14px;text-align:right;padding-right:3px">114426</div>
<div class="cb" style="left:1527px;top:343px"><svg width="11" height="11" viewBox="0 0 11 11" style="position:absolute;left:0;top:0"><path d="M2.6 4.8 L4.7 7.8 L10.6 0.8" fill="none" stroke="#6487b3" stroke-width="1.6"/></svg></div>
<div class="a song" style="left:331px;top:364px;width:28px;height:27px;line-height:27px;color:#666;text-align:center;font-size:14px">44</div>
<div class="cb" style="left:367px;top:371px"></div>
<div class="cb" style="left:397px;top:371px"></div>
<div class="cb" style="left:427px;top:371px"></div>
<div class="a sans" style="left:501.5px;top:364px;width:120px;height:27px;line-height:27px;color:#555;font-size:12.8px">6005007</div>
<div class="a song" style="left:627px;top:364px;width:222px;height:27px;line-height:27px;color:#111;font-size:14px">钢绞线群锚(5孔)</div>
<div class="a song" style="left:852px;top:364px;width:81px;height:27px;line-height:27px;color:#222;font-size:14px">包括夹片<span class="p">.</span><span class="p">.</span><span class="p">.</span></div>
<div class="a song" style="left:937px;top:364px;width:46px;height:27px;line-height:27px;color:#222;font-size:14px">套</div>
<div class="a song" style="left:984px;top:364px;width:74px;height:27px;line-height:27px;color:#333;font-size:14px;text-align:right;padding-right:3px">1151<span class="p">.</span>82</div>
<div class="a song" style="left:1059px;top:364px;width:74px;height:27px;line-height:27px;color:#333;font-size:14px;text-align:right;padding-right:3px">1151<span class="p">.</span>82</div>
<div class="a song" style="left:1209px;top:364px;width:69px;height:27px;line-height:27px;color:#111;font-size:14px;text-align:right;padding-right:3px">102<span class="p">.</span>56</div>
<div class="a song" style="left:1279px;top:364px;width:69px;height:27px;line-height:27px;color:#e0202a;font-size:14px;text-align:right;padding-right:3px">112</div>
<div class="a song" style="left:1349px;top:364px;width:79px;height:27px;line-height:27px;color:#111;font-size:14px;text-align:right;padding-right:3px">118130<span class="p">.</span>66</div>
<div class="a song" style="left:1429px;top:364px;width:79px;height:27px;line-height:27px;color:#111;font-size:14px;text-align:right;padding-right:3px">129003<span class="p">.</span>84</div>
<div class="cb" style="left:1527px;top:371px"><svg width="11" height="11" viewBox="0 0 11 11" style="position:absolute;left:0;top:0"><path d="M2.6 4.8 L4.7 7.8 L10.6 0.8" fill="none" stroke="#6487b3" stroke-width="1.6"/></svg></div>
<div class="a song" style="left:331px;top:392px;width:28px;height:27px;line-height:27px;color:#666;text-align:center;font-size:14px">45</div>
<div class="cb" style="left:367px;top:399px"></div>
<div class="cb" style="left:397px;top:399px"></div>
<div class="cb" style="left:427px;top:399px"></div>
<div class="a sans" style="left:501.5px;top:392px;width:120px;height:27px;line-height:27px;color:#555;font-size:12.8px">7801001</div>
<div class="a song" style="left:627px;top:392px;width:222px;height:27px;line-height:27px;color:#111;font-size:14px">其他材料费</div>
<div class="a song" style="left:852px;top:392px;width:81px;height:27px;line-height:27px;color:#222;font-size:14px"></div>
<div class="a song" style="left:937px;top:392px;width:46px;height:27px;line-height:27px;color:#222;font-size:14px">元</div>
<div class="a song" style="left:984px;top:392px;width:74px;height:27px;line-height:27px;color:#333;font-size:14px;text-align:right;padding-right:3px">27004<span class="p">.</span>989</div>
<div class="a song" style="left:1059px;top:392px;width:74px;height:27px;line-height:27px;color:#333;font-size:14px;text-align:right;padding-right:3px">27004<span class="p">.</span>989</div>
<div class="a song" style="left:1209px;top:392px;width:69px;height:27px;line-height:27px;color:#111;font-size:14px;text-align:right;padding-right:3px">1</div>
<div class="a song" style="left:1279px;top:392px;width:69px;height:27px;line-height:27px;color:#111;font-size:14px;text-align:right;padding-right:3px">1</div>
<div class="a song" style="left:1349px;top:392px;width:79px;height:27px;line-height:27px;color:#111;font-size:14px;text-align:right;padding-right:3px">27004<span class="p">.</span>99</div>
<div class="a song" style="left:1429px;top:392px;width:79px;height:27px;line-height:27px;color:#111;font-size:14px;text-align:right;padding-right:3px">27004<span class="p">.</span>99</div>
<div class="cb" style="left:1527px;top:399px"><svg width="11" height="11" viewBox="0 0 11 11" style="position:absolute;left:0;top:0"><path d="M2.6 4.8 L4.7 7.8 L10.6 0.8" fill="none" stroke="#6487b3" stroke-width="1.6"/></svg></div>
<div class="a song" style="left:331px;top:420px;width:28px;height:27px;line-height:27px;color:#666;text-align:center;font-size:14px">46</div>
<div class="cb" style="left:367px;top:427px"></div>
<div class="cb" style="left:397px;top:427px"></div>
<div class="cb" style="left:427px;top:427px"></div>
<div class="a sans" style="left:501.5px;top:420px;width:120px;height:27px;line-height:27px;color:#555;font-size:12.8px">7901001</div>
<div class="a song" style="left:627px;top:420px;width:222px;height:27px;line-height:27px;color:#111;font-size:14px">设备摊销费</div>
<div class="a song" style="left:852px;top:420px;width:81px;height:27px;line-height:27px;color:#222;font-size:14px"></div>
<div class="a song" style="left:937px;top:420px;width:46px;height:27px;line-height:27px;color:#222;font-size:14px">元</div>
<div class="a song" style="left:984px;top:420px;width:74px;height:27px;line-height:27px;color:#333;font-size:14px;text-align:left;padding-left:8px">126511<span class="p">.</span><span class="p">.</span><span class="p">.</span></div>
<div class="a song" style="left:1059px;top:420px;width:74px;height:27px;line-height:27px;color:#333;font-size:14px;text-align:left;padding-left:8px">126511<span class="p">.</span><span class="p">.</span><span class="p">.</span></div>
<div class="a song" style="left:1209px;top:420px;width:69px;height:27px;line-height:27px;color:#111;font-size:14px;text-align:right;padding-right:3px">1</div>
<div class="a song" style="left:1279px;top:420px;width:69px;height:27px;line-height:27px;color:#111;font-size:14px;text-align:right;padding-right:3px">1</div>
<div class="a song" style="left:1349px;top:420px;width:79px;height:27px;line-height:27px;color:#111;font-size:14px;text-align:right;padding-right:3px">126511<span class="p">.</span>81</div>
<div class="a song" style="left:1429px;top:420px;width:79px;height:27px;line-height:27px;color:#111;font-size:14px;text-align:right;padding-right:3px">126511<span class="p">.</span>81</div>
<div class="cb" style="left:1527px;top:427px"><svg width="11" height="11" viewBox="0 0 11 11" style="position:absolute;left:0;top:0"><path d="M2.6 4.8 L4.7 7.8 L10.6 0.8" fill="none" stroke="#6487b3" stroke-width="1.6"/></svg></div>
<div class="a" style="left:331px;top:448px;width:1217px;height:19px;background:#f7f7f7;"></div>
<div class="a" style="left:331px;top:448px;width:28px;height:19px;background:#f0f0f0;"></div>
<div class="hl" style="left:331px;top:447px;width:1217px;background:#cdcdcd"></div>
<div class="a" style="left:378px;top:453.5px;width:709px;height:10px;background:#dcdcdc;border-radius:5px"></div>
<svg class="a" style="left:364px;top:454px" width="10" height="8" viewBox="0 0 10 8"><path d="M4.5 0 V8 L0 4 Z M9.5 0 V8 L5 4 Z" fill="#d2d2d2"/></svg>
<svg class="a" style="left:1533px;top:454px" width="10" height="8" viewBox="0 0 10 8"><path d="M0.5 0 V8 L5 4 Z M5.5 0 V8 L10 4 Z" fill="#d2d2d2"/></svg>
<svg class="a" style="left:1552px;top:86px" width="11" height="10" viewBox="0 0 11 10"><path d="M5.5 0 L10 4 H1 Z M5.5 4.5 L10 8.5 H1 Z" fill="#d6d6d6"/></svg>
<svg class="a" style="left:1552px;top:433px" width="11" height="10" viewBox="0 0 11 10"><path d="M5.5 10 L10 6 H1 Z M5.5 5.5 L10 1.5 H1 Z" fill="#d6d6d6"/></svg>
<div class="a" style="left:331px;top:467px;width:1237px;height:6px;background:#d9d9d9;"></div>
<div class="a" style="left:331px;top:473px;width:1237px;height:27px;background:#dde9f3;"></div>
<div class="a" style="left:342px;top:478px;width:92px;height:22px;background:#3a9fdc;"></div>
<div class="a " style="left:342px;top:480px;width:92px;height:22px;line-height:22px;color:#fff;font-size:12px;text-align:center">预算价计算</div>
<div class="a" style="left:436px;top:479px;width:79px;height:21px;background:#fff;"></div>
<div class="a " style="left:436px;top:480px;width:79px;height:22px;line-height:22px;color:#555;font-size:12px;text-align:center">单条刷价</div>
<div class="btn" style="left:533px;top:479px;width:63px;height:16px;line-height:18px">原价运杂费</div>
<div class="btn" style="left:608px;top:479px;width:63px;height:16px;line-height:18px">运杂费方案</div>
<div class="btn" style="left:688px;top:479px;width:87px;height:16px;line-height:18px">批量计算运杂费</div>
<div class="a" style="left:331px;top:500px;width:1237px;height:29px;background:#f0f0f0;"></div>
<div class="a" style="left:331px;top:529px;width:344px;height:82px;background:#fff;"></div>
<div class="a" style="left:331px;top:529px;width:20px;height:82px;background:#f0f0f0;"></div>
<div class="a" style="left:675px;top:500px;width:5px;height:111px;background:#d2d2d8;"></div>
<div class="a" style="left:680px;top:529px;width:888px;height:82px;background:#fff;"></div>
<div class="a" style="left:680px;top:529px;width:20px;height:82px;background:#f0f0f0;"></div>
<div class="a" style="left:331px;top:584px;width:344px;height:27px;background:#91e26b;"></div>
<div class="a" style="left:680px;top:528px;width:795px;height:29px;background:#91e26b;"></div>
<div class="hd" style="left:351px;top:501px;width:40px;height:27px;line-height:28px">编号</div>
<div class="hd" style="left:391px;top:501px;width:99px;height:27px;line-height:28px">名称</div>
<div class="hd" style="left:490px;top:501px;width:67px;height:27px;line-height:28px">预算价</div>
<div class="hd" style="left:557px;top:501px;width:62px;height:27px;line-height:28px">原价</div>
<div class="hd" style="left:619px;top:501px;width:56px;height:27px;line-height:28px">运杂费</div>
<div class="vl" style="left:351px;top:500px;height:84px;background:#cdcdcd"></div>
<div class="vl" style="left:351px;top:584px;height:27px;background:#88d564"></div>
<div class="vl" style="left:391px;top:500px;height:84px;background:#cdcdcd"></div>
<div class="vl" style="left:391px;top:584px;height:27px;background:#88d564"></div>
<div class="vl" style="left:490px;top:500px;height:84px;background:#cdcdcd"></div>
<div class="vl" style="left:490px;top:584px;height:27px;background:#88d564"></div>
<div class="vl" style="left:557px;top:500px;height:84px;background:#cdcdcd"></div>
<div class="vl" style="left:557px;top:584px;height:27px;background:#88d564"></div>
<div class="vl" style="left:619px;top:500px;height:84px;background:#cdcdcd"></div>
<div class="vl" style="left:619px;top:584px;height:27px;background:#88d564"></div>
<div class="hl" style="left:331px;top:500px;width:344px;background:#cdcdcd"></div>
<div class="hl" style="left:331px;top:528px;width:344px;background:#cdcdcd"></div>
<div class="hl" style="left:331px;top:556px;width:344px;background:#cdcdcd"></div>
<div class="a song" style="left:331px;top:529px;width:20px;height:28px;line-height:28px;color:#666;text-align:center;font-size:14px">1</div>
<div class="a song" style="left:355px;top:529px;width:36px;height:28px;line-height:28px;color:#111;font-size:14px;letter-spacing:1px">5<span class="p">.</span><span class="p">.</span><span class="p">.</span></div>
<div class="a song" style="left:395px;top:529px;width:95px;height:28px;line-height:28px;color:#111;font-size:14px">中（粗）砂</div>
<div class="a song" style="left:491px;top:529px;width:66px;height:28px;line-height:28px;color:#1a1ab4;font-size:14px;text-align:right;padding-right:3px">261<span class="p">.</span>67</div>
<div class="a song" style="left:558px;top:529px;width:61px;height:28px;line-height:28px;color:#1a1ab4;font-size:14px;text-align:right;padding-right:3px">150</div>
<div class="a song" style="left:620px;top:529px;width:55px;height:28px;line-height:28px;color:#1a1ab4;font-size:14px;text-align:right;padding-right:3px">102<span class="p">.</span>6</div>
<div class="a song" style="left:331px;top:557px;width:20px;height:28px;line-height:28px;color:#666;text-align:center;font-size:14px">2</div>
<div class="a song" style="left:355px;top:557px;width:36px;height:28px;line-height:28px;color:#111;font-size:14px;letter-spacing:1px">5<span class="p">.</span><span class="p">.</span><span class="p">.</span></div>
<div class="a song" style="left:395px;top:557px;width:95px;height:28px;line-height:28px;color:#111;font-size:14px">片石</div>
<div class="a song" style="left:491px;top:557px;width:66px;height:28px;line-height:28px;color:#1a1ab4;font-size:14px;text-align:right;padding-right:3px">147<span class="p">.</span>7</div>
<div class="a song" style="left:558px;top:557px;width:61px;height:28px;line-height:28px;color:#1a1ab4;font-size:14px;text-align:right;padding-right:3px">90</div>
<div class="a song" style="left:620px;top:557px;width:55px;height:28px;line-height:28px;color:#1a1ab4;font-size:14px;text-align:right;padding-right:3px">54<span class="p">.</span>72</div>
<div class="a song" style="left:331px;top:585px;width:20px;height:28px;line-height:28px;color:#666;text-align:center;font-size:14px">3</div>
<div class="a song" style="left:355px;top:585px;width:36px;height:28px;line-height:28px;color:#111;font-size:14px;letter-spacing:1px">5<span class="p">.</span><span class="p">.</span><span class="p">.</span></div>
<div class="a song" style="left:395px;top:585px;width:95px;height:28px;line-height:28px;color:#111;font-size:14px">碎石（2cm）</div>
<div class="a song" style="left:491px;top:585px;width:66px;height:28px;line-height:28px;color:#1a1ab4;font-size:14px;text-align:right;padding-right:3px">143<span class="p">.</span>38</div>
<div class="a song" style="left:558px;top:585px;width:61px;height:28px;line-height:28px;color:#1a1ab4;font-size:14px;text-align:right;padding-right:3px">114</div>
<div class="a song" style="left:620px;top:585px;width:55px;height:28px;line-height:28px;color:#1a1ab4;font-size:14px;text-align:right;padding-right:3px">25<span class="p">.</span>65</div>
<div class="hd" style="left:700px;top:501px;width:75px;height:27px;line-height:28px;overflow:hidden">省份</div>
<div class="hd" style="left:775px;top:501px;width:119px;height:27px;line-height:28px;overflow:hidden">起讫地点</div>
<div class="hd" style="left:894px;top:501px;width:55px;height:27px;line-height:28px;overflow:hidden">运输<span class="q">.</span><span class="q">.</span><span class="q">.</span></div>
<div class="hd" style="left:949px;top:501px;width:35px;height:27px;line-height:28px;overflow:hidden">权重</div>
<div class="hd" style="left:984px;top:501px;width:67px;height:27px;line-height:28px;overflow:hidden">材料原价</div>
<div class="hd" style="left:1051px;top:501px;width:59px;height:27px;line-height:28px;overflow:hidden">运费</div>
<div class="hd" style="left:1110px;top:501px;width:55px;height:27px;line-height:28px;overflow:hidden">运距<span class="q">.</span><span class="q">.</span><span class="q">.</span></div>
<div class="hd" style="left:1165px;top:501px;width:80px;height:27px;line-height:28px;overflow:hidden"><span style="letter-spacing:1px">t</span><span class="q" style="width:12px">·</span><span style="letter-spacing:1px">km</span>运<span class="q">.</span><span class="q">.</span><span class="q">.</span></div>
<div class="hd" style="left:1245px;top:501px;width:50px;height:27px;line-height:28px;overflow:hidden">装卸<span class="q">.</span><span class="q">.</span><span class="q">.</span></div>
<div class="hd" style="left:1295px;top:501px;width:50px;height:27px;line-height:28px;overflow:hidden">装卸<span class="q">.</span><span class="q">.</span><span class="q">.</span></div>
<div class="hd" style="left:1345px;top:501px;width:50px;height:27px;line-height:28px;overflow:hidden">其他<span class="q">.</span><span class="q">.</span><span class="q">.</span></div>
<div class="hd" style="left:1395px;top:501px;width:80px;height:27px;line-height:28px;overflow:hidden">运费增加(%)</div>
<div class="vl" style="left:700px;top:500px;height:28px;background:#cdcdcd"></div>
<div class="vl" style="left:700px;top:528px;height:29px;background:#88d564"></div>
<div class="vl" style="left:775px;top:500px;height:28px;background:#cdcdcd"></div>
<div class="vl" style="left:775px;top:528px;height:29px;background:#88d564"></div>
<div class="vl" style="left:894px;top:500px;height:28px;background:#cdcdcd"></div>
<div class="vl" style="left:894px;top:528px;height:29px;background:#88d564"></div>
<div class="vl" style="left:949px;top:500px;height:28px;background:#cdcdcd"></div>
<div class="vl" style="left:949px;top:528px;height:29px;background:#88d564"></div>
<div class="vl" style="left:984px;top:500px;height:28px;background:#cdcdcd"></div>
<div class="vl" style="left:984px;top:528px;height:29px;background:#88d564"></div>
<div class="vl" style="left:1051px;top:500px;height:28px;background:#cdcdcd"></div>
<div class="vl" style="left:1051px;top:528px;height:29px;background:#88d564"></div>
<div class="vl" style="left:1110px;top:500px;height:28px;background:#cdcdcd"></div>
<div class="vl" style="left:1110px;top:528px;height:29px;background:#88d564"></div>
<div class="vl" style="left:1165px;top:500px;height:28px;background:#cdcdcd"></div>
<div class="vl" style="left:1165px;top:528px;height:29px;background:#88d564"></div>
<div class="vl" style="left:1245px;top:500px;height:28px;background:#cdcdcd"></div>
<div class="vl" style="left:1245px;top:528px;height:29px;background:#88d564"></div>
<div class="vl" style="left:1295px;top:500px;height:28px;background:#cdcdcd"></div>
<div class="vl" style="left:1295px;top:528px;height:29px;background:#88d564"></div>
<div class="vl" style="left:1345px;top:500px;height:28px;background:#cdcdcd"></div>
<div class="vl" style="left:1345px;top:528px;height:29px;background:#88d564"></div>
<div class="vl" style="left:1395px;top:500px;height:28px;background:#cdcdcd"></div>
<div class="vl" style="left:1395px;top:528px;height:29px;background:#88d564"></div>
<div class="vl" style="left:1475px;top:500px;height:28px;background:#cdcdcd"></div>
<div class="vl" style="left:1475px;top:528px;height:29px;background:#88d564"></div>
<div class="hl" style="left:680px;top:500px;width:888px;background:#cdcdcd"></div>
<div class="hl" style="left:680px;top:528px;width:888px;background:#cdcdcd"></div>
<div class="a song" style="left:680px;top:529px;width:20px;height:28px;line-height:28px;color:#666;text-align:center;font-size:14px">1</div>
<div class="a song" style="left:704px;top:529px;width:70px;height:28px;line-height:28px;color:#1a1ab4;font-size:14px">海南</div>
<div class="a song" style="left:779px;top:529px;width:110px;height:28px;line-height:28px;color:#1a1ab4;font-size:14px">料场-工地</div>
<div class="a song" style="left:898px;top:529px;width:50px;height:28px;line-height:28px;color:#1a1ab4;font-size:14px">汽车</div>
<div class="a song" style="left:949px;top:529px;width:35px;height:28px;line-height:28px;color:#1a1ab4;font-size:14px;text-align:right;padding-right:3px">1</div>
<div class="a song" style="left:984px;top:529px;width:67px;height:28px;line-height:28px;color:#1a1ab4;font-size:14px;text-align:right;padding-right:3px">114</div>
<div class="a song" style="left:1051px;top:529px;width:59px;height:28px;line-height:28px;color:#111;font-size:14px;text-align:right;padding-right:3px">25<span class="p">.</span>65</div>
<div class="a song" style="left:1110px;top:529px;width:55px;height:28px;line-height:28px;color:#1a1ab4;font-size:14px;text-align:right;padding-right:3px">15</div>
<div class="a song" style="left:1165px;top:529px;width:80px;height:28px;line-height:28px;color:#1a1ab4;font-size:14px;text-align:right;padding-right:3px">1<span class="p">.</span>14</div>
<div class="a" style="left:1568px;top:23px;width:26px;height:588px;background:#e1eaf2;"></div>
<div class="a" style="left:1589px;top:23px;width:5px;height:146px;background:#edf2f7;"></div>
<div class="a" style="left:1568px;top:23px;width:21px;height:146px;background:#dbe3ee;border:1px solid #cdd7e2"></div>
<div class="hl" style="left:1568px;top:102px;width:21px;background:#c9d4e0"></div>
<div class="t" style="left:1572px;top:40px;width:13px;font-family:'Liberation Serif','Noto Serif CJK SC',serif;font-size:12px;line-height:12.7px;color:#777;white-space:normal;word-break:break-all">工料机库</div>
<div class="t" style="left:1572px;top:122px;width:13px;font-family:'Liberation Serif','Noto Serif CJK SC',serif;font-size:12px;line-height:11.8px;color:#777;white-space:normal;word-break:break-all">定额库</div>
<div class="a" style="left:1117px;top:-6px;width:50px;height:33.7px;background:#8a8d90;border-radius:5px"></div>
<div class="a" style="left:1131px;top:-10px;width:22px;height:28px;background:#f5f5f5;border-radius:0 0 11px 11px"></div>
<div class="a" style="left:1391px;top:34px;width:57px;height:1px;background:#151515;"></div>
<div class="a" style="left:1391px;top:35px;width:57px;height:1px;background:#ececec;"></div>
<div class="a" style="left:1391px;top:36px;width:57px;height:24px;background:#1a1a1a;background:linear-gradient(#a5a5a5 0%,#5a5a5a 10%,#333 25%,#1c1c1c 48%,#111 100%)"></div>
<div class="a" style="left:1394px;top:39px;width:10px;height:19px;background-image:radial-gradient(circle,#4a4a4a 0.7px,transparent 0.9px);background-size:3px 4px"></div>
<div class="a song" style="left:1411.5px;top:38px;width:20px;height:18px;line-height:18px;color:#fff;font-size:12px;font-family:'Liberation Mono',monospace;font-size:11px;letter-spacing:-0.6px">CH</div>
<div class="a" style="left:1437px;top:42px;width:5px;height:2px;background:#fff;"></div>
<div class="arr" style="left:1436.5px;top:51px;border-top-color:#fff;border-left-width:3px;border-right-width:3px;border-top-width:3px"></div>
<div class="a" style="left:790px;top:246px;width:183px;height:24px;background:#fff;border:1px solid #d5d9de"></div>
<svg class="a" style="left:764px;top:240px" width="34" height="32" viewBox="0 0 34 32"><defs><linearGradient id="sg" x1="0" y1="0" x2="0" y2="1"><stop offset="0" stop-color="#f6692c"/><stop offset="1" stop-color="#e6401a"/></linearGradient></defs><rect x="6" y="5" width="23" height="23" rx="3.5" fill="url(#sg)" transform="rotate(-13 17 16)"/><text x="17.5" y="25" font-family="Liberation Sans,sans-serif" font-weight="bold" font-style="italic" font-size="23" fill="#fff" text-anchor="middle" transform="rotate(-8 17 16)">S</text></svg>
<div class="a " style="left:800px;top:248px;width:18px;height:20px;line-height:20px;color:#2a74cc;font-size:15px;font-weight:900">中</div>
<div class="a " style="left:823px;top:247px;width:14px;height:20px;line-height:20px;color:#2a74cc;font-size:15px;font-weight:bold;letter-spacing:-1px">°,</div>
<svg class="a" style="left:844px;top:250px" width="16" height="16" viewBox="0 0 16 16"><circle cx="8" cy="8" r="6.5" fill="#fff" stroke="#2a74cc" stroke-width="1.6"/><circle cx="5.7" cy="6.3" r="1" fill="#2a74cc"/><circle cx="10.3" cy="6.3" r="1" fill="#2a74cc"/><path d="M4.8 9.5 Q8 12.5 11.2 9.5" fill="none" stroke="#2a74cc" stroke-width="1.3"/></svg>
<svg class="a" style="left:867px;top:249px" width="14" height="18" viewBox="0 0 14 18"><rect x="4.5" y="1" width="5" height="9" rx="2.5" fill="#2a74cc"/><path d="M2 8 Q2 13 7 13 Q12 13 12 8" fill="none" stroke="#2a74cc" stroke-width="1.4"/><path d="M7 13 V16 M4 16.3 H10" stroke="#2a74cc" stroke-width="1.4"/></svg>
<svg class="a" style="left:887px;top:252px" width="18" height="12" viewBox="0 0 18 12"><rect x="0.5" y="0.5" width="17" height="11" rx="1.5" fill="#2a74cc"/><path d="M3 3.5 h2 M6.5 3.5 h2 M10 3.5 h2 M13.5 3.5 h1.5 M3 6 h2 M6.5 6 h2 M10 6 h2 M13.5 6 h1.5 M4 8.8 h10" stroke="#fff" stroke-width="1.2"/></svg>
<svg class="a" style="left:910px;top:250px" width="18" height="17" viewBox="0 0 18 17"><circle cx="8" cy="4" r="3" fill="#c9ccd1"/><path d="M2 14 Q2 8 8 8 Q12 8 13 11 V14 Z" fill="#c9ccd1"/><rect x="10" y="10" width="7" height="5" fill="#dcdfe3" stroke="#b9bdc4"/></svg>
<svg class="a" style="left:932px;top:250px" width="16" height="16" viewBox="0 0 16 16"><path d="M1 4 L5 1.5 Q8 4 11 1.5 L15 4 L13 7.5 L11.8 6.8 V14.5 H4.2 V6.8 L3 7.5 Z" fill="#2a74cc"/></svg>
<svg class="a" style="left:954px;top:251px" width="15" height="15" viewBox="0 0 15 15"><rect x="1" y="1" width="5.5" height="5.5" fill="#2a74cc"/><rect x="8.5" y="1.5" width="4.5" height="4.5" fill="none" stroke="#2a74cc" stroke-width="1.2"/><rect x="1" y="8.5" width="5.5" height="5.5" fill="#2a74cc"/><rect x="8.5" y="8.5" width="5.5" height="5.5" fill="#2a74cc"/></svg>
</body></html>
